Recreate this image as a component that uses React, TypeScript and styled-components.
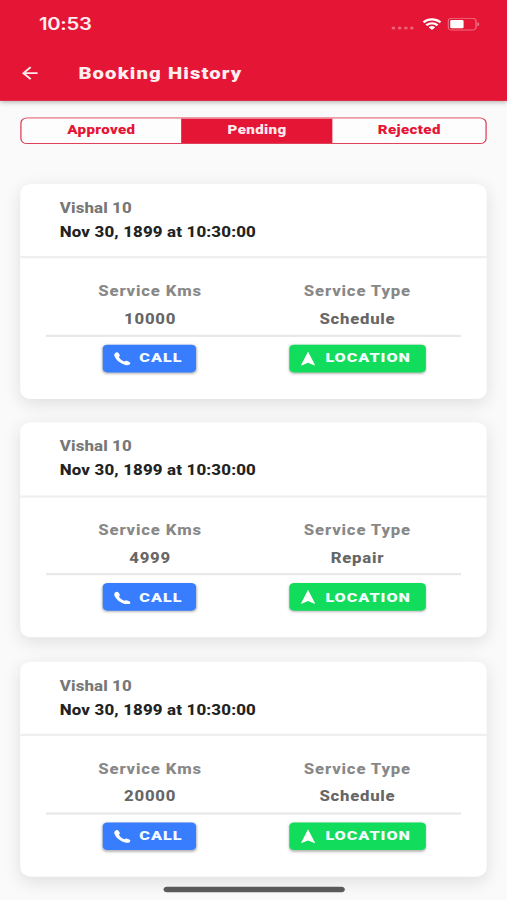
import React from "react";
import styled, { createGlobalStyle } from "styled-components";

const GlobalStyle = createGlobalStyle`
  * { box-sizing: border-box; }
  html, body { margin: 0; padding: 0; background: #fafafa; }
  body { overflow: hidden; }
`;

const Viewport = styled.div`
  width: 507px;
  height: 900px;
  overflow: hidden;
`;

const Screen = styled.main`
  width: 375px;
  height: 812px;
  position: relative;
  overflow: hidden;
  background: #fafafa;
  font-family: Roboto, "Liberation Sans", sans-serif;
  font-weight: 800;
  transform: scale(1.352, 1.10837);
  transform-origin: 0 0;
`;

const Header = styled.header`
  height: 91px;
  background: #e51635;
  color: #ffeef0;
  box-shadow: 0 1px 4px rgba(0, 0, 0, 0.32);
`;

const StatusBar = styled.div`
  height: 43px;
  padding: 0 20px 0 28.8px;
  display: flex;
  align-items: center;
  justify-content: space-between;
`;

const Clock = styled.span`
  font-family: Inter, sans-serif;
  font-size: 15px;
  line-height: 18px;
  font-weight: 600;
  letter-spacing: -0.2px;
`;

const StatusIcons = styled.div`
  display: flex;
  align-items: center;
  gap: 4.5px;
  svg { display: block; }
`;

const TitleBar = styled.div`
  height: 46px;
  padding-left: 15px;
  display: flex;
  align-items: center;
  gap: 28px;
`;

const Title = styled.h1`
  margin: 0;
  font-size: 15px;
  line-height: 20px;
  font-weight: 900;
  letter-spacing: 0.82px;
`;

const Segments = styled.nav`
  margin: 14.6px 14.8px 0 15px;
  height: 24px;
  display: grid;
  grid-template-columns: 118px 112.2px 1fr;
  border: 1px solid #e0405a;
  border-radius: 5px;
  overflow: hidden;
`;

const Segment = styled.button<{ $active?: boolean }>`
  border: 0;
  padding: 0;
  font: 900 11.2px/21px Roboto, sans-serif;
  letter-spacing: 0.26px;
  color: ${(p) => (p.$active ? "#ffe9ec" : "#e51635")};
  background: ${(p) => (p.$active ? "#e51635" : "#fdfdfd")};
`;

const CardList = styled.section`
  padding: 36px 14.8px 0 15.2px;
  display: flex;
  flex-direction: column;
  gap: 21.5px;
`;

const Card = styled.article`
  height: 194px;
  flex: none;
  border-radius: 8px;
  background: #fff;
  box-shadow: 0 4px 14px rgba(0, 0, 0, 0.11);
`;

const CardHead = styled.div`
  height: 67.5px;
  padding: 11.3px 0 0 29px;
  border-bottom: 2px solid #efefef;
`;

const Customer = styled.div`
  font-size: 12.5px;
  line-height: 22px;
  letter-spacing: 0.08px;
  color: #777;
`;

const BookedAt = styled.div`
  font-size: 12.5px;
  line-height: 21px;
  letter-spacing: 0.11px;
  color: #222;
`;

const Details = styled.div`
  margin: 0 19.2px;
  height: 70.6px;
  padding-top: 17.2px;
  display: grid;
  grid-template-columns: 1fr 1fr;
  align-content: start;
  text-align: center;
  border-bottom: 2px solid #e8e8e8;
`;

const Label = styled.div`
  font-size: 12.4px;
  line-height: 25px;
  letter-spacing: 0.6px;
  color: #888;
`;

const Value = styled.div`
  font-size: 12.4px;
  line-height: 25px;
  letter-spacing: 0.55px;
  color: #666;
`;

const Actions = styled.div`
  margin: 7.3px 19.6px 0 19px;
  display: grid;
  grid-template-columns: 1fr 1fr;
  justify-items: center;
`;

const ActionButton = styled.button<{ $tone: "call" | "location" }>`
  width: ${(p) => (p.$tone === "call" ? "69px" : "101px")};
  height: 25px;
  padding: 0 0 0 ${(p) => (p.$tone === "call" ? "7.5px" : "8.9px")};
  display: flex;
  align-items: center;
  gap: ${(p) => (p.$tone === "call" ? "6.3px" : "6.6px")};
  border: 0;
  border-radius: 3.5px;
  font: 900 12px/20px Roboto, sans-serif;
  letter-spacing: 0.7px;
  color: #f4fbff;
  background: ${(p) => (p.$tone === "call" ? "#387dfd" : "#12dc5c")};
  box-shadow: 0 1px 2px rgba(0, 0, 0, 0.28);
  svg { display: block; flex: none; }
`;

const HomeIndicator = styled.div`
  position: absolute;
  left: 121px;
  top: 800px;
  width: 133.5px;
  height: 4.5px;
  border-radius: 3px;
  background: #5a5a5a;
`;

const Signal = () => (
  <svg width="18" height="12" viewBox="0 0 18 12" fill="#fff" opacity=".32">
    {[2, 6.6, 11.2, 15.6].map((x) => (
      <circle key={x} cx={x} cy="9.2" r="1.4" />
    ))}
  </svg>
);

const Wifi = () => (
  <svg width="15" height="12" viewBox="0 0 15 11.4" fill="#fff">
    <path d="M7.500 2.300c2.100 0 4 .8 5.400 2.200.1.100.3.100.4 0l1-1.100c.1-.1.1-.3 0-.4a9.800 9.800 0 0 0-13.600 0c-.1.100-.1.300 0 .4l1 1.100c.1.100.3.100.4 0a7.700 7.700 0 0 1 5.400-2.200z" />
    <path d="M7.500 5.900c1.200 0 2.300.4 3.100 1.200.1.100.3.100.4 0l1.100-1.100c.1-.1.1-.3 0-.4a6.600 6.600 0 0 0-9.200 0c-.1.100-.1.300 0 .4L4 7.100c.1.100.3.100.4 0 .8-.8 1.900-1.200 3.100-1.200z" />
    <path d="M9.700 8.500c.1-.1.1-.3 0-.4a3.500 3.500 0 0 0-4.400 0c-.1.100-.1.300 0 .4l2 2c.1.100.3.100.4 0z" />
  </svg>
);

const Battery = () => (
  <svg width="24" height="12" viewBox="0 0 24 12">
    <rect x=".5" y=".5" width="20.600" height="10.600" rx="2.600" fill="none" stroke="#fff" strokeOpacity=".38" />
    <rect x="2" y="2" width="9.900" height="7.600" rx="1" fill="#fff" />
    <path d="M22.200 4v3.600c.8-.3 1.200-1 1.200-1.800s-.4-1.500-1.200-1.800z" fill="#fff" fillOpacity=".45" />
  </svg>
);

const BackArrow = () => (
  <svg width="15" height="16" viewBox="0 0 15 16" fill="none" stroke="#ffe9ec" strokeWidth="1.5">
    <path d="M12.800 8H2.300M7.700 2.600L2.300 8l5.400 5.400" />
  </svg>
);

const Phone = () => (
  <svg width="13" height="12.500" viewBox="-.2 -.2 13.400 12.700" fill="#fff">
    <path d="M1.100 1.200C1.900.3 3.100.4 3.700 1.500l.7 1.400c.4.8.2 1.300-.5 2 .8 1.900 2.200 3.300 4.300 4.200.7-.7 1.200-.8 2-.4l1.600.8c1 .6 1 1.800.1 2.500-.8.6-2 .7-3.100.3C4.900 10.900 1.900 8.100.6 4.600.1 3.200.3 2 1.100 1.200z" />
  </svg>
);

const Navigate = () => (
  <svg width="11.700" height="13" viewBox="0 0 13 12" preserveAspectRatio="none" fill="#fff">
    <path d="M6.500.1 12.200 11.300c.1.300-.1.500-.4.400L6.500 9.500 1.200 11.700c-.3.100-.5-.1-.4-.4z" />
  </svg>
);

const bookings = [
  { kms: "10000", type: "Schedule" },
  { kms: "4999", type: "Repair" },
  { kms: "20000", type: "Schedule" },
];

export default function App() {
  return (
    <>
      <GlobalStyle />
      <Viewport>
        <Screen>
          <Header>
            <StatusBar>
              <Clock>10:53</Clock>
              <StatusIcons>
                <Signal />
                <Wifi />
                <Battery />
              </StatusIcons>
            </StatusBar>
            <TitleBar>
              <BackArrow />
              <Title>Booking History</Title>
            </TitleBar>
          </Header>
          <Segments>
            <Segment>Approved</Segment>
            <Segment $active>Pending</Segment>
            <Segment>Rejected</Segment>
          </Segments>
          <CardList>
            {bookings.map((b) => (
              <Card key={b.kms}>
                <CardHead>
                  <Customer>Vishal 10</Customer>
                  <BookedAt>Nov 30, 1899 at 10:30:00</BookedAt>
                </CardHead>
                <Details>
                  <Label>Service Kms</Label>
                  <Label>Service Type</Label>
                  <Value>{b.kms}</Value>
                  <Value>{b.type}</Value>
                </Details>
                <Actions>
                  <ActionButton $tone="call"><Phone />CALL</ActionButton>
                  <ActionButton $tone="location"><Navigate />LOCATION</ActionButton>
                </Actions>
              </Card>
            ))}
          </CardList>
          <HomeIndicator />
        </Screen>
      </Viewport>
    </>
  );
}
